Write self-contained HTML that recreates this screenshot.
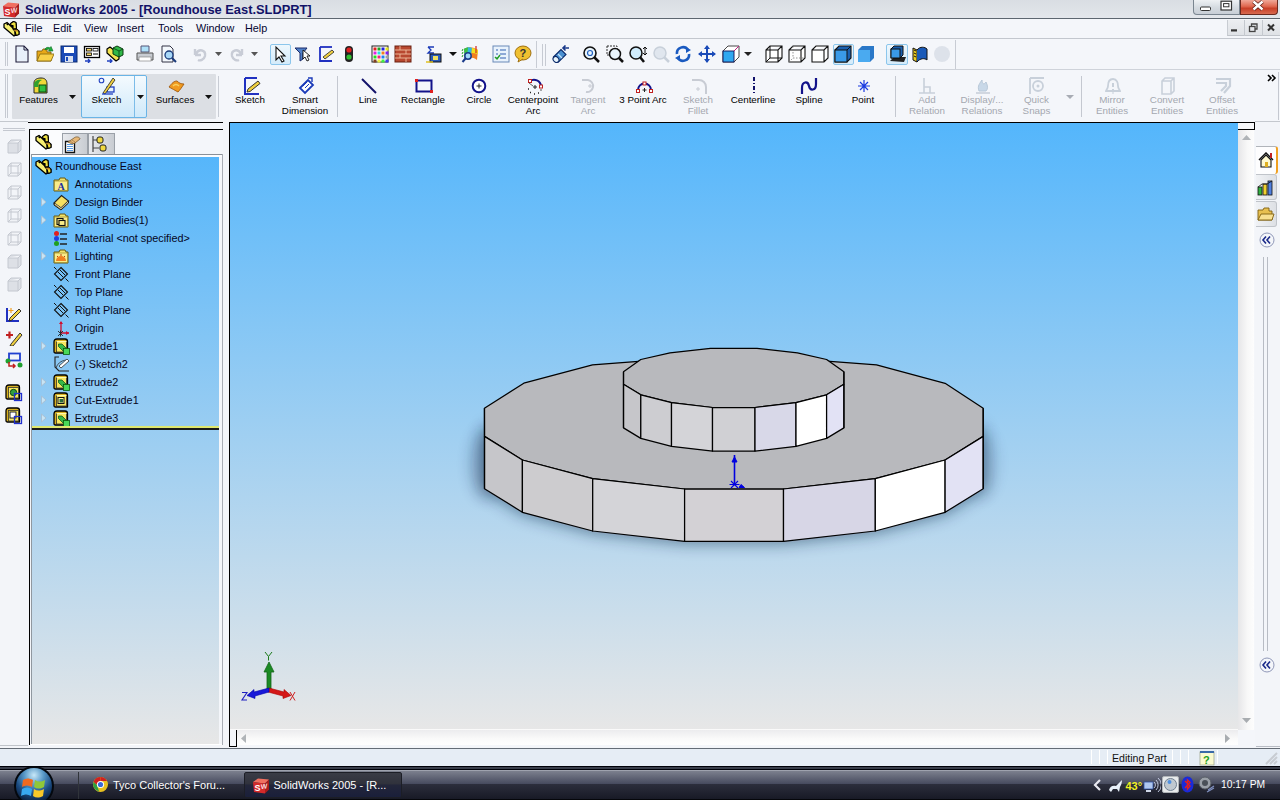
<!DOCTYPE html>
<html><head><meta charset="utf-8">
<style>
*{margin:0;padding:0;box-sizing:border-box}
html,body{width:1280px;height:800px;overflow:hidden;background:#f3f5f9;font-family:"Liberation Sans",sans-serif;position:relative}
.a{position:absolute}
#title{left:0;top:0;width:1280px;height:19px;background:linear-gradient(#d9dde3,#e3e6eb);border-bottom:1px solid #5d6670}
#title .t{left:25px;top:1.6px;font-weight:bold;font-size:12.85px;color:#121268;letter-spacing:0px;white-space:nowrap}
#menu{left:0;top:19px;width:1280px;height:20px;background:#f4f6fa;border-bottom:1px solid #c3c7ce}
#menu span{position:absolute;top:2.6px;font-size:10.8px;color:#050530}
#tb1{left:0;top:39px;width:1280px;height:31px;background:#f4f6fa;border-bottom:1px solid #cfd3da}
#cm{left:0;top:70px;width:1280px;height:52px;background:#f4f6fa}
.lbl{position:absolute;font-size:9.3px;color:#000;text-align:center;line-height:11px;white-space:nowrap}
.dis{color:#a8a8ac}
#main{left:0;top:122px;width:1280px;height:625px}
#vp{left:229px;top:122px;width:1026px;height:625px;border-left:1px solid #000;border-top:1px solid #000;background:#f4f6fa}
#vpbg{left:230px;top:123px;width:1008px;height:607px;background:linear-gradient(#54b6fc,#e7e7e7)}
#ft{left:29px;top:129px;width:194px;height:616px;border-left:1px solid #000;border-top:1px solid #000;background:#f4f6fa}
#tree{left:31px;top:157px;width:188px;height:587px;background:linear-gradient(#56b6fb,#e7e7e7)}
.row{position:absolute;left:0;height:18px;font-size:10.7px;color:#0b0b30;white-space:nowrap}
#status{left:0;top:748px;width:1280px;height:18px;background:#e6edf5;border-top:1px solid #646c76}
#task{left:0;top:767px;width:1280px;height:33px;background:linear-gradient(#3a3f47 0%,#1e2228 45%,#0d0f12 100%);border-top:1px solid #000}
</style></head><body>
<div id="title" class="a"><div class="t a">SolidWorks 2005 - [Roundhouse East.SLDPRT]</div></div>
<div id="menu" class="a">
<span style="left:25px">File</span><span style="left:53px">Edit</span><span style="left:84px">View</span><span style="left:117px">Insert</span><span style="left:158px">Tools</span><span style="left:196px">Window</span><span style="left:245px">Help</span>
</div>
<div id="tb1" class="a"></div>
<div id="cm" class="a"></div>
<div id="vp" class="a"></div>
<div id="vpbg" class="a"></div>
<div id="ft" class="a"></div>
<div id="tree" class="a"></div>
<div id="status" class="a"></div>
<div id="task" class="a"></div>
<svg class="a" style="left:2px;top:1px" width="18" height="17" viewBox="0 0 18 17"><path d="M1,5 L6,1.5 L17,2.5 L13,6.5 Z" fill="#f07060"/><path d="M13,6.5 L17,2.5 L17,12.5 L13,16.5 Z" fill="#a81c1c"/><path d="M1,5 L13,6.5 L13,16.5 L2,15 Z" fill="#d42a2a"/><text x="2.6" y="14" font-size="9" font-weight="bold" fill="#fff" font-family="Liberation Sans">S</text><text x="8.8" y="13.5" font-size="7" font-weight="bold" fill="#f4d8d8" font-family="Liberation Sans" transform="skewY(-8)">W</text></svg>
<div class="a" style="left:1193px;top:0;width:47px;height:15px;border:1px solid #7a8590;border-top:none;border-radius:0 0 0 4px;background:linear-gradient(#eef1f4,#d4dae0 55%,#c8ced6)"></div>
<div class="a" style="left:1240px;top:0;width:38px;height:15px;border:1px solid #6a2a20;border-top:none;border-radius:0 0 4px 0;background:linear-gradient(#f0a898,#e06850 45%,#c84028 60%,#d86a50)"></div>
<svg class="a" style="left:1199px;top:0px" width="40" height="13" viewBox="0 0 40 13"><rect x="1.5" y="7" width="10" height="3.5" rx="1" fill="#fff" stroke="#333" stroke-width="1"/><rect x="22" y="1.2" width="10.5" height="8.8" fill="#fff" stroke="#333" stroke-width="1.2"/><rect x="24.6" y="3.6" width="5.3" height="3.2" fill="none" stroke="#333" stroke-width="1"/></svg>
<svg class="a" style="left:1251px;top:0px" width="14" height="12" viewBox="0 0 14 12"><path d="M2.5,1.5 L11.5,9.5 M11.5,1.5 L2.5,9.5" stroke="#5a1a10" stroke-width="3.8"/><path d="M2.5,1.5 L11.5,9.5 M11.5,1.5 L2.5,9.5" stroke="#fff" stroke-width="2.4"/></svg>
<svg class="a" style="left:3px;top:20px" width="18" height="17" viewBox="0 0 18 17"><path d="M1,4 L4,2.5 L8,5 L8,2.5 L10.5,1 L13,2 L14,4.5 L14,9 L16.5,11 L16.5,14.5 L13.5,16 L11,16 Z" fill="#000"/><path d="M1,4 L4,2.5 L12,10 L12,15.5 L11,16 L1,7.5 Z" fill="#f6ee70" stroke="#000" stroke-width="1.3" stroke-linejoin="round"/><path d="M7.5,3.5 L10.5,1.5 L13,2.5 L13.5,8.5 L10,9 L10,5.5 L8,5.5 Z" fill="#eee040" stroke="#000" stroke-width="1.2" stroke-linejoin="round"/><path d="M10.5,9.5 L14,9.5 L16,11.5 L16,14.5 L13,15.5 L12,11 Z" fill="#f0e030" stroke="#000" stroke-width="1.2" stroke-linejoin="round"/><path d="M10.5,9.8 L14,9.8 L15.5,11.2 L12,11.5Z" fill="#c08a28"/><path d="M3.5,3.5 L5,5" stroke="#000" stroke-width="1.2"/></svg>
<div class="a" style="left:1227px;top:20px;width:53px;height:16px;background:linear-gradient(#eceef1,#dfe2e6);border-left:1px solid #c8ccd2;border-bottom:1px solid #c0c4ca"></div>
<div class="a" style="left:1244px;top:20px;width:1px;height:16px;background:#c4c8ce"></div><div class="a" style="left:1262px;top:20px;width:1px;height:16px;background:#c4c8ce"></div>
<svg class="a" style="left:1227px;top:20px" width="53" height="16" viewBox="0 0 53 16"><rect x="4" y="9.3" width="6" height="2.2" fill="#333"/><rect x="22.5" y="6.5" width="5.5" height="5" fill="none" stroke="#444" stroke-width="1.3"/><path d="M24.5,6.5 L24.5,4 L30,4 L30,9 L28,9" fill="none" stroke="#444" stroke-width="1.3"/><path d="M41,4.5 L47,10.5 M47,4.5 L41,10.5" stroke="#333" stroke-width="2"/></svg>
<div class="a" style="left:5px;top:42px;width:3px;height:24px;border-left:1px solid #c6cad2;border-right:1px solid #c6cad2"></div>
<svg class="a" style="left:13px;top:45px" width="18" height="18" viewBox="0 0 18 18"><path d="M3,1 L11,1 L15,5 L15,17 L3,17 Z" fill="#fff" stroke="#1a1a3a" stroke-width="1.1"/><path d="M4,2 L10,2 L14,6 L14,16 L4,16Z" fill="#e8f0fa"/><path d="M11,1 L11,5 L15,5" fill="none" stroke="#1a1a3a"/></svg>
<svg class="a" style="left:36px;top:45px" width="18" height="18" viewBox="0 0 18 18"><path d="M1,6 L6,6 L7,4 L11,4 L11,7 L15,7 L15,16 L1,16Z" fill="#e8a818" stroke="#806010" stroke-width="0.9"/><path d="M4,9 L18,9 L15,16 L1,16Z" fill="#f8d048" stroke="#907010" stroke-width="0.9"/><path d="M9,4 C10,2 13,2 14,3 L15,1.5 L17,6 L12.5,6 L13.5,4.5 C12.5,4 11,4 9,5Z" fill="#20b040" stroke="#0a6a20" stroke-width="0.6"/></svg>
<svg class="a" style="left:60px;top:45px" width="18" height="18" viewBox="0 0 18 18"><rect x="1" y="1" width="16" height="16" fill="#1a4ab8" stroke="#0a2a70"/><rect x="4" y="2" width="10" height="6" fill="#fff"/><rect x="5" y="11" width="8" height="6" fill="#d8e0f0"/><rect x="6" y="12" width="2" height="4" fill="#1a4ab8"/></svg>
<svg class="a" style="left:83px;top:45px" width="18" height="18" viewBox="0 0 18 18"><rect x="1.5" y="1.5" width="15" height="11" fill="#fff" stroke="#000" stroke-width="1.3"/><rect x="3.5" y="3.5" width="5" height="2.5" fill="#f8d868" stroke="#000" stroke-width="0.8"/><rect x="10" y="3.5" width="5" height="2.5" fill="#fff" stroke="#000" stroke-width="0.8"/><rect x="3.5" y="8" width="5" height="2.5" fill="#f8d868" stroke="#000" stroke-width="0.8"/><path d="M10,9 L15,9" stroke="#000"/><path d="M2,16 L7,16 M5,14 L7,16 L5,18" stroke="#2040c0" stroke-width="1.3" fill="none"/></svg>
<svg class="a" style="left:106px;top:45px" width="18" height="18" viewBox="0 0 18 18"><path d="M1,4 L4,2 L13,9 L13,14 L10,16 L1,8Z" fill="#f4e450" stroke="#000" stroke-width="1.2" stroke-linejoin="round"/><path d="M7,3 L11,1 L17,4 L17,10 L13,12 L7,9Z" fill="#30b848" stroke="#0a3a10" stroke-width="1"/><path d="M7,3 L13,6 L17,4 M13,6 L13,12" stroke="#0a3a10" stroke-width="0.8" fill="none"/><path d="M1,16 L6,16 M4,14 L6,16 L4,18" stroke="#2040c0" stroke-width="1.3" fill="none"/></svg>
<svg class="a" style="left:136px;top:45px" width="18" height="18" viewBox="0 0 18 18"><path d="M5,1 L13,1 L13,7 L5,7Z" fill="#aee0f8" stroke="#557"/><path d="M1,8 L17,8 L17,15 L1,15Z" fill="#c8ccd2" stroke="#555"/><rect x="3" y="12" width="12" height="4" fill="#fff" stroke="#777" stroke-width="0.6"/></svg>
<svg class="a" style="left:160px;top:45px" width="18" height="18" viewBox="0 0 18 18"><path d="M2,1 L10,1 L13,4 L13,17 L2,17Z" fill="#f4f8fc" stroke="#334" stroke-width="1"/><circle cx="9" cy="10" r="4" fill="#a8d8f8" stroke="#1a3a7a" stroke-width="1.3"/><path d="M12,13 L16,17" stroke="#1a3a7a" stroke-width="2"/></svg>
<svg class="a" style="left:191px;top:45px" width="18" height="18" viewBox="0 0 18 18"><path d="M4,4 L4,10 M4,10 L10,10 M5,9 C8,3 15,5 14,11 C13,15 9,16 7,15" fill="none" stroke="#c8ccd6" stroke-width="2.4"/></svg>
<svg class="a" style="left:228px;top:45px" width="18" height="18" viewBox="0 0 18 18"><path d="M14,4 L14,10 M14,10 L8,10 M13,9 C10,3 3,5 4,11 C5,15 9,16 11,15" fill="none" stroke="#c8ccd6" stroke-width="2.4"/></svg>
<svg class="a" style="left:215px;top:52px" width="7" height="4" viewBox="0 0 7 4"><path d="M0,0 L7,0 L3.5,4Z" fill="#555"/></svg>
<svg class="a" style="left:251px;top:52px" width="7" height="4" viewBox="0 0 7 4"><path d="M0,0 L7,0 L3.5,4Z" fill="#555"/></svg>
<div class="a" style="left:270px;top:44px;width:21px;height:21px;border:1px solid #8cc6ec;border-radius:2px;background:linear-gradient(#eef7fd,#d4ebfa)"></div>
<svg class="a" style="left:271px;top:45px" width="18" height="18" viewBox="0 0 18 18"><path d="M5,2 L5,15 L8,12 L11,17 L13,16 L10,11 L14,11Z" fill="#fff" stroke="#111" stroke-width="1.1"/></svg>
<svg class="a" style="left:294px;top:45px" width="18" height="18" viewBox="0 0 18 18"><path d="M1,3 L13,3 L9,8 L9,14 L6,16 L6,8Z" fill="#5080c8" stroke="#1a2a6a"/><path d="M9,5 L9,14 L11,12 L13,16 L15,15 L13,11 L16,11Z" fill="#fff" stroke="#111" stroke-width="0.9"/></svg>
<svg class="a" style="left:317px;top:45px" width="18" height="18" viewBox="0 0 18 18"><path d="M3,2 L3,16 L15,16" fill="none" stroke="#2030c0" stroke-width="1.8"/><path d="M3,2 L15,2" stroke="#2030c0" stroke-width="1.8"/><path d="M6,12 L15,5 L17,7 L8,14 Z" fill="#f0d040" stroke="#222" stroke-width="0.8"/></svg>
<svg class="a" style="left:340px;top:45px" width="18" height="18" viewBox="0 0 18 18"><rect x="5" y="1" width="8" height="16" rx="4" fill="#222"/><circle cx="9" cy="5" r="2.6" fill="#e02020"/><circle cx="9" cy="12" r="2.6" fill="#30c030"/></svg>
<svg class="a" style="left:371px;top:45px" width="18" height="18" viewBox="0 0 18 18"><rect x="1" y="1" width="16" height="16" fill="#fff" stroke="#222"/><rect x="2.5" y="2.5" width="3" height="3" fill="#e02020"/><rect x="6.5" y="2.5" width="3" height="3" fill="#20a020"/><rect x="10.5" y="2.5" width="3" height="3" fill="#2020e0"/><rect x="14.5" y="2.5" width="3" height="3" fill="#e0e020"/><rect x="2.5" y="6.5" width="3" height="3" fill="#e020e0"/><rect x="6.5" y="6.5" width="3" height="3" fill="#20e0e0"/><rect x="10.5" y="6.5" width="3" height="3" fill="#f08020"/><rect x="14.5" y="6.5" width="3" height="3" fill="#8020f0"/><rect x="2.5" y="10.5" width="3" height="3" fill="#20e020"/><rect x="6.5" y="10.5" width="3" height="3" fill="#f02080"/><rect x="10.5" y="10.5" width="3" height="3" fill="#2080f0"/><rect x="14.5" y="10.5" width="3" height="3" fill="#a0a0a0"/><rect x="2.5" y="14.5" width="3" height="3" fill="#804020"/><rect x="6.5" y="14.5" width="3" height="3" fill="#f0f040"/><rect x="10.5" y="14.5" width="3" height="3" fill="#40f040"/><rect x="14.5" y="14.5" width="3" height="3" fill="#4040f0"/></svg>
<svg class="a" style="left:394px;top:45px" width="18" height="18" viewBox="0 0 18 18"><rect x="1" y="1" width="16" height="16" fill="#b84830" stroke="#6a2010"/><path d="M1,5 L17,5 M1,9 L17,9 M1,13 L17,13 M6,1 L6,5 M12,5 L12,9 M6,9 L6,13 M12,13 L12,17" stroke="#f0c0a0" stroke-width="0.9"/></svg>
<svg class="a" style="left:425px;top:45px" width="18" height="18" viewBox="0 0 18 18"><path d="M3,2 L9,2 M3,2 L6,5 L3,8 L9,8" stroke="#1a3ab8" stroke-width="1.3" fill="none"/><rect x="5" y="9" width="11" height="8" fill="#2a5ab8" stroke="#111"/><rect x="8" y="11" width="5" height="4" fill="#f0e060"/><path d="M1,17 L8,17" stroke="#e0c020" stroke-width="1.5"/></svg>
<svg class="a" style="left:449px;top:52px" width="8" height="4" viewBox="0 0 8 4"><path d="M0,0 L8,0 L4,4Z" fill="#111"/></svg>
<svg class="a" style="left:461px;top:45px" width="18" height="18" viewBox="0 0 18 18"><path d="M3,4 C7,1 13,2 17,5 L16,15 C12,12 7,12 4,14Z" fill="#f08020"/><path d="M3,4 C6,2 9,2 11,3 L10,13 C8,12 6,13 4,14Z" fill="#30b8e0"/><path d="M3,4 C4,3 6,2.5 7,2.5 L6,13 C5,13 4.5,13.5 4,14Z" fill="#40c040"/><path d="M11,3 C13,3 15,4 17,5 L16.5,9 C14,8 12,8 10.5,8Z" fill="#f0e020"/><path d="M2,4 L1,6 M2,7 L1,9 M2,10 L1,12" stroke="#20a020" stroke-width="1"/><circle cx="7" cy="11" r="3.2" fill="#a0d8f8" stroke="#1a3a8a" stroke-width="1.5"/><path d="M4.5,13.5 L1.5,17" stroke="#1a3a8a" stroke-width="2"/><path d="M15,1 L15,8" stroke="#d02020" stroke-width="1.2"/></svg>
<svg class="a" style="left:492px;top:45px" width="18" height="18" viewBox="0 0 18 18"><rect x="1" y="1" width="16" height="16" fill="#e8f2fc" stroke="#6a8ab8"/><path d="M4,5 L6,5 M8,5 L14,5 M4,9 L6,9 M8,9 L14,9 M4,13 L6,13 M8,13 L14,13" stroke="#3060b0" stroke-width="1.2"/><path d="M3,12 L5,14 L8,10" stroke="#20a020" stroke-width="1.4" fill="none"/></svg>
<svg class="a" style="left:514px;top:45px" width="18" height="18" viewBox="0 0 18 18"><ellipse cx="9" cy="8" rx="8" ry="7" fill="#f0c030" stroke="#a07010"/><path d="M5,14 L4,17 L9,14" fill="#f0c030" stroke="#a07010"/><text x="5.5" y="12" font-size="11" font-weight="bold" fill="#333" font-family="Liberation Sans">?</text></svg>
<div class="a" style="left:536px;top:41px;width:1px;height:27px;background:#c8ccd4"></div>
<div class="a" style="left:542px;top:44px;width:4px;height:22px;border-left:1px solid #c6cad2;border-right:1px solid #c6cad2"></div>
<svg class="a" style="left:552px;top:45px" width="18" height="18" viewBox="0 0 18 18"><path d="M1.5,12 L9,4.5 L14,9.5 L6.5,17Z" fill="#4a90d0" stroke="#0a2a6a" stroke-width="1.1"/><ellipse cx="4" cy="14.5" rx="2.6" ry="3.2" transform="rotate(-45 4 14.5)" fill="#e8f4fc" stroke="#0a2a6a" stroke-width="1.1"/><path d="M6,9 L10,13" stroke="#c0e0f8" stroke-width="1.2"/><path d="M17,3 L11,3 M13.5,0.5 L11,3 L13.5,5.5" stroke="#1a3a8a" stroke-width="1.6" fill="none"/></svg>
<svg class="a" style="left:582px;top:45px" width="18" height="18" viewBox="0 0 18 18"><circle cx="8" cy="8" r="6" fill="#e8f4fc" stroke="#111" stroke-width="1.6"/><circle cx="8" cy="8" r="2.5" fill="none" stroke="#2060c0" stroke-width="1.2"/><path d="M12,12 L17,17" stroke="#111" stroke-width="2.5"/></svg>
<svg class="a" style="left:606px;top:45px" width="18" height="18" viewBox="0 0 18 18"><rect x="1" y="1" width="10" height="9" fill="none" stroke="#333" stroke-dasharray="2,1"/><circle cx="9" cy="9" r="5.5" fill="#e8f4fc" stroke="#111" stroke-width="1.5"/><path d="M13,13 L17,17" stroke="#111" stroke-width="2.5"/></svg>
<svg class="a" style="left:629px;top:45px" width="18" height="18" viewBox="0 0 18 18"><circle cx="7" cy="8" r="6" fill="#d0ecfc" stroke="#111" stroke-width="1.5"/><path d="M11,12 L15,17" stroke="#111" stroke-width="2.5"/><path d="M16,2 L16,10 M14,4 L16,2 L18,4 M14,8 L16,10 L18,8" stroke="#111" stroke-width="1" fill="none"/></svg>
<svg class="a" style="left:652px;top:45px" width="18" height="18" viewBox="0 0 18 18"><circle cx="8" cy="8" r="6" fill="#e0e6ee" stroke="#c8d0da" stroke-width="1.5"/><path d="M12,12 L17,17" stroke="#c8d0da" stroke-width="2.5"/></svg>
<svg class="a" style="left:674px;top:45px" width="18" height="18" viewBox="0 0 18 18"><path d="M3,9 A6,6 0 0 1 14,5" fill="none" stroke="#1a5ac0" stroke-width="2.6"/><path d="M15,9 A6,6 0 0 1 4,13" fill="none" stroke="#1a5ac0" stroke-width="2.6"/><path d="M12,2 L17,5 L12,8Z M6,10 L1,13 L6,16Z" fill="#1a5ac0"/></svg>
<svg class="a" style="left:698px;top:45px" width="18" height="18" viewBox="0 0 18 18"><path d="M9,1 L9,17 M1,9 L17,9" stroke="#1a4ab8" stroke-width="2"/><path d="M9,0 L6,4 L12,4Z M9,18 L6,14 L12,14Z M0,9 L4,6 L4,12Z M18,9 L14,6 L14,12Z" fill="#1a4ab8"/></svg>
<svg class="a" style="left:722px;top:45px" width="18" height="18" viewBox="0 0 18 18"><path d="M1,6 L6,1 L17,1 L17,12 L12,17 L1,17Z" fill="#fff" stroke="#333" stroke-width="0.9"/><rect x="1" y="6" width="11" height="11" fill="#30a8f0" stroke="#115" stroke-width="0.9"/><path d="M12,6 L17,1" stroke="#c02080"/></svg>
<svg class="a" style="left:744px;top:52px" width="8" height="4" viewBox="0 0 8 4"><path d="M0,0 L8,0 L4,4Z" fill="#222"/></svg>
<svg class="a" style="left:765px;top:45px" width="18" height="18" viewBox="0 0 18 18"><path d="M1,5 L5,1 L17,1 L17,13 L13,17 L1,17Z M1,5 L13,5 L17,1 M13,5 L13,17" fill="#fff" stroke="#111" stroke-width="1.1"/><path d="M5,1 L5,13 L17,13 M1,17 L5,13" stroke="#111" stroke-width="1" fill="none"/></svg>
<svg class="a" style="left:788px;top:45px" width="18" height="18" viewBox="0 0 18 18"><path d="M1,5 L5,1 L17,1 L17,13 L13,17 L1,17Z M1,5 L13,5 L17,1 M13,5 L13,17" fill="#fff" stroke="#111" stroke-width="1.1"/><path d="M5,1 L5,13 L17,13 M1,17 L5,13" stroke="#777" stroke-width="0.8" stroke-dasharray="1.5,1.5" fill="none"/></svg>
<svg class="a" style="left:811px;top:45px" width="18" height="18" viewBox="0 0 18 18"><path d="M1,5 L5,1 L17,1 L17,13 L13,17 L1,17Z M1,5 L13,5 L17,1 M13,5 L13,17" fill="#fff" stroke="#111" stroke-width="1.1"/></svg>
<div class="a" style="left:833px;top:44px;width:21px;height:21px;border:1px solid #8cc6ec;border-radius:2px;background:linear-gradient(#eef7fd,#d4ebfa)"></div>
<svg class="a" style="left:834px;top:45px" width="18" height="18" viewBox="0 0 18 18"><path d="M1,5 L5,1 L17,1 L17,13 L13,17 L1,17Z" fill="#1a60b0" stroke="#111" stroke-width="1.1"/><rect x="1" y="5" width="12" height="12" fill="#3a9ae8" stroke="#111" stroke-width="1"/><path d="M13,5 L17,1" stroke="#111"/></svg>
<svg class="a" style="left:857px;top:45px" width="18" height="18" viewBox="0 0 18 18"><path d="M1,5 L5,1 L17,1 L17,13 L13,17 L1,17Z" fill="#2a78c8"/><rect x="1" y="5" width="12" height="12" fill="#4aaaf0"/></svg>
<div class="a" style="left:886px;top:44px;width:22px;height:21px;border:1px solid #8cc6ec;border-radius:2px;background:linear-gradient(#eef7fd,#d4ebfa)"></div>
<svg class="a" style="left:888px;top:45px" width="18" height="18" viewBox="0 0 18 18"><path d="M2,16 L6,12 L18,12 L16,17 Z" fill="#222"/><path d="M3,4 L6,1 L15,1 L15,10 L12,13 L3,13Z" fill="#1a60b0" stroke="#111"/><rect x="3" y="4" width="9" height="9" fill="#3a9ae8" stroke="#111"/></svg>
<svg class="a" style="left:911px;top:45px" width="18" height="18" viewBox="0 0 18 18"><path d="M2,3 L2,15 L6,17 L6,5Z" fill="#f0d020" stroke="#111"/><path d="M6,5 C9,1 14,2 16,4 L16,15 C14,13 9,13 6,17" fill="#1a5ab8" stroke="#111"/><path d="M3,5 L5,6 M3,8 L5,9 M3,11 L5,12" stroke="#111"/></svg>
<svg class="a" style="left:933px;top:45px" width="18" height="18" viewBox="0 0 18 18"><circle cx="9" cy="9" r="8" fill="#dde2ea"/></svg>
<div class="a" style="left:955px;top:40px;width:1px;height:29px;background:#c8ccd4"></div>
<div class="a" style="left:5px;top:74px;width:3px;height:44px;border-left:1px solid #c6cad2;border-right:1px solid #c6cad2"></div>
<div class="a" style="left:12px;top:74px;width:204px;height:45px;background:#dcdfe4;border-radius:1px"></div>
<div class="a" style="left:81px;top:75px;width:66px;height:43px;border:1px solid #6ab4e6;border-radius:2px;background:linear-gradient(#f4fafe 0%,#e2f2fc 50%,#cfe9fa 100%)"></div>
<div class="a" style="left:134px;top:76px;width:1px;height:41px;background:#7cbce8"></div>
<div class="a" style="left:218px;top:76px;width:1px;height:41px;background:#c8ccd4"></div>
<svg class="a" style="left:69px;top:95px" width="7" height="4" viewBox="0 0 7 4"><path d="M0,0 L7,0 L3.5,4Z" fill="#111"/></svg>
<svg class="a" style="left:137px;top:95px" width="7" height="4" viewBox="0 0 7 4"><path d="M0,0 L7,0 L3.5,4Z" fill="#111"/></svg>
<svg class="a" style="left:205px;top:95px" width="7" height="4" viewBox="0 0 7 4"><path d="M0,0 L7,0 L3.5,4Z" fill="#111"/></svg>
<div class="a" style="left:-21.5px;width:120px;text-align:center;top:94.33px;font-size:9.8px;line-height:11.27px;color:#000;white-space:nowrap">Features</div>
<div class="a" style="left:46.5px;width:120px;text-align:center;top:94.33px;font-size:9.8px;line-height:11.27px;color:#000;white-space:nowrap">Sketch</div>
<div class="a" style="left:115px;width:120px;text-align:center;top:94.33px;font-size:9.8px;line-height:11.27px;color:#000;white-space:nowrap">Surfaces</div>
<svg class="a" style="left:31px;top:77px" width="18" height="18" viewBox="0 0 18 18"><path d="M3,6 C3,2 7,1 10,1 C14,1 16,3 16,7 L16,16 L3,16Z" fill="#f0d838" stroke="#222"/><path d="M3,8 C3,3 8,2 11,3 C8,4 7,7 7,10 L3,10Z" fill="#30a030"/><rect x="8" y="8" width="7" height="7" fill="#30c040" stroke="#0a4a10"/></svg>
<svg class="a" style="left:98px;top:77px" width="18" height="18" viewBox="0 0 18 18"><circle cx="3.5" cy="3.5" r="2.3" fill="none" stroke="#2040c0" stroke-width="1.1"/><rect x="9" y="10" width="7" height="5" fill="none" stroke="#2040c0" stroke-width="1.3"/><path d="M5,16 L15,1 L17,3 L7,17Z" fill="#f0d040" stroke="#222" stroke-width="0.8"/><path d="M4,17 L15,17" stroke="#2040c0" stroke-width="1.3"/></svg>
<svg class="a" style="left:167px;top:78px" width="18" height="16" viewBox="0 0 18 16"><path d="M2,9 C5,5 7,3 10,3 C12,5 14,6 17,6 C15,9 13,12 11,14 C8,12 5,11 2,9Z" fill="#f09a20" stroke="#a05a10" stroke-width="0.9"/><path d="M6,8 C8,6 10,6 12,8" stroke="#f8d060" stroke-width="1.5" fill="none"/></svg>
<div class="a" style="left:190px;width:120px;text-align:center;top:94.33px;font-size:9.8px;line-height:11.27px;color:#000;white-space:nowrap">Sketch</div>
<div class="a" style="left:245px;width:120px;text-align:center;top:94.33px;font-size:9.8px;line-height:11.27px;color:#000;white-space:nowrap">Smart</div>
<div class="a" style="left:245px;width:120px;text-align:center;top:105.13px;font-size:9.8px;line-height:11.27px;color:#000;white-space:nowrap">Dimension</div>
<div class="a" style="left:308px;width:120px;text-align:center;top:94.33px;font-size:9.8px;line-height:11.27px;color:#000;white-space:nowrap">Line</div>
<div class="a" style="left:363px;width:120px;text-align:center;top:94.33px;font-size:9.8px;line-height:11.27px;color:#000;white-space:nowrap">Rectangle</div>
<div class="a" style="left:419px;width:120px;text-align:center;top:94.33px;font-size:9.8px;line-height:11.27px;color:#000;white-space:nowrap">Circle</div>
<div class="a" style="left:473px;width:120px;text-align:center;top:94.33px;font-size:9.8px;line-height:11.27px;color:#000;white-space:nowrap">Centerpoint</div>
<div class="a" style="left:473px;width:120px;text-align:center;top:105.13px;font-size:9.8px;line-height:11.27px;color:#000;white-space:nowrap">Arc</div>
<div class="a" style="left:528px;width:120px;text-align:center;top:94.33px;font-size:9.8px;line-height:11.27px;color:#a4a8b0;white-space:nowrap">Tangent</div>
<div class="a" style="left:528px;width:120px;text-align:center;top:105.13px;font-size:9.8px;line-height:11.27px;color:#a4a8b0;white-space:nowrap">Arc</div>
<div class="a" style="left:583px;width:120px;text-align:center;top:94.33px;font-size:9.8px;line-height:11.27px;color:#000;white-space:nowrap">3 Point Arc</div>
<div class="a" style="left:638px;width:120px;text-align:center;top:94.33px;font-size:9.8px;line-height:11.27px;color:#a4a8b0;white-space:nowrap">Sketch</div>
<div class="a" style="left:638px;width:120px;text-align:center;top:105.13px;font-size:9.8px;line-height:11.27px;color:#a4a8b0;white-space:nowrap">Fillet</div>
<div class="a" style="left:693px;width:120px;text-align:center;top:94.33px;font-size:9.8px;line-height:11.27px;color:#000;white-space:nowrap">Centerline</div>
<div class="a" style="left:749px;width:120px;text-align:center;top:94.33px;font-size:9.8px;line-height:11.27px;color:#000;white-space:nowrap">Spline</div>
<div class="a" style="left:803px;width:120px;text-align:center;top:94.33px;font-size:9.8px;line-height:11.27px;color:#000;white-space:nowrap">Point</div>
<div class="a" style="left:867px;width:120px;text-align:center;top:94.33px;font-size:9.8px;line-height:11.27px;color:#a4a8b0;white-space:nowrap">Add</div>
<div class="a" style="left:867px;width:120px;text-align:center;top:105.13px;font-size:9.8px;line-height:11.27px;color:#a4a8b0;white-space:nowrap">Relation</div>
<div class="a" style="left:922px;width:120px;text-align:center;top:94.33px;font-size:9.8px;line-height:11.27px;color:#a4a8b0;white-space:nowrap">Display/...</div>
<div class="a" style="left:922px;width:120px;text-align:center;top:105.13px;font-size:9.8px;line-height:11.27px;color:#a4a8b0;white-space:nowrap">Relations</div>
<div class="a" style="left:976.5px;width:120px;text-align:center;top:94.33px;font-size:9.8px;line-height:11.27px;color:#a4a8b0;white-space:nowrap">Quick</div>
<div class="a" style="left:976.5px;width:120px;text-align:center;top:105.13px;font-size:9.8px;line-height:11.27px;color:#a4a8b0;white-space:nowrap">Snaps</div>
<div class="a" style="left:1052px;width:120px;text-align:center;top:94.33px;font-size:9.8px;line-height:11.27px;color:#a4a8b0;white-space:nowrap">Mirror</div>
<div class="a" style="left:1052px;width:120px;text-align:center;top:105.13px;font-size:9.8px;line-height:11.27px;color:#a4a8b0;white-space:nowrap">Entities</div>
<div class="a" style="left:1107px;width:120px;text-align:center;top:94.33px;font-size:9.8px;line-height:11.27px;color:#a4a8b0;white-space:nowrap">Convert</div>
<div class="a" style="left:1107px;width:120px;text-align:center;top:105.13px;font-size:9.8px;line-height:11.27px;color:#a4a8b0;white-space:nowrap">Entities</div>
<div class="a" style="left:1162px;width:120px;text-align:center;top:94.33px;font-size:9.8px;line-height:11.27px;color:#a4a8b0;white-space:nowrap">Offset</div>
<div class="a" style="left:1162px;width:120px;text-align:center;top:105.13px;font-size:9.8px;line-height:11.27px;color:#a4a8b0;white-space:nowrap">Entities</div>
<div class="a" style="left:337px;top:76px;width:1px;height:41px;background:#c4c8d0"></div>
<div class="a" style="left:895px;top:76px;width:1px;height:41px;background:#c4c8d0"></div>
<div class="a" style="left:1081px;top:76px;width:1px;height:41px;background:#c4c8d0"></div>
<svg class="a" style="left:1066px;top:95px" width="8" height="4" viewBox="0 0 8 4"><path d="M0,0 L8,0 L4,4Z" fill="#a8acb4"/></svg>
<svg class="a" style="left:1267px;top:74px" width="10" height="8" viewBox="0 0 10 8"><path d="M1,1 L4,4 L1,7 M5,1 L8,4 L5,7" stroke="#000" stroke-width="1.6" fill="none"/></svg>
<div class="a" style="left:1278px;top:72px;width:1px;height:48px;background:#c4c8d0"></div>
<svg class="a" style="left:243px;top:77px" width="18" height="18" viewBox="0 0 18 18"><path d="M2,1 L14,1 M2,1 L2,17 L16,17" stroke="#2030c0" stroke-width="2" fill="none"/><path d="M5,12 L15,4 L17,6.5 L7,14.5 L4,15Z" fill="#f0d040" stroke="#222" stroke-width="0.9"/></svg>
<svg class="a" style="left:297px;top:77px" width="18" height="18" viewBox="0 0 18 18"><path d="M3,11 L11,3 L16,8 L8,16Z" fill="#fff" stroke="#1a3ab8" stroke-width="1.8"/><path d="M6,9 L10,5 M8,11 L12,7" stroke="#1a3ab8" stroke-width="1"/><path d="M11,1 L15,1 L15,5" stroke="#1a3ab8" stroke-width="1.4" fill="none"/></svg>
<svg class="a" style="left:360px;top:78px" width="18" height="18" viewBox="0 0 18 18"><path d="M2,1 L16,15" stroke="#12126a" stroke-width="2"/></svg>
<svg class="a" style="left:415px;top:77px" width="18" height="18" viewBox="0 0 18 18"><rect x="1.5" y="3.5" width="15" height="11" fill="none" stroke="#12128a" stroke-width="2"/><rect x="0" y="2" width="3" height="3" fill="#e02020"/><rect x="15" y="13" width="3" height="3" fill="#e02020"/></svg>
<svg class="a" style="left:470px;top:77px" width="18" height="18" viewBox="0 0 18 18"><circle cx="9" cy="9" r="6.3" fill="#fff" stroke="#12128a" stroke-width="2"/><path d="M6.5,9 L11.5,9 M9,6.5 L9,11.5" stroke="#222" stroke-width="1"/></svg>
<svg class="a" style="left:525px;top:77px" width="18" height="18" viewBox="0 0 18 18"><path d="M5,4 A7,7 0 0 1 16,9" fill="none" stroke="#12128a" stroke-width="2"/><path d="M8,10 L12,10 M10,8 L10,12" stroke="#222"/><rect x="3.5" y="2.5" width="3" height="3" fill="#fff" stroke="#c02020"/><rect x="14.5" y="8" width="3" height="3" fill="#fff" stroke="#c02020"/><path d="M4,6 L8,9" stroke="#333" stroke-width="0.8"/><path d="M3,12 L4,12 M5,15.5 L6,15.5 M9,17 L10,17 M13,16 L14,16 M15.5,13 L16.5,13" stroke="#222" stroke-width="1.4"/></svg>
<svg class="a" style="left:580px;top:77px" width="18" height="18" viewBox="0 0 18 18"><path d="M2,3 L8,3 A6,6 0 1 1 6,15" fill="none" stroke="#c8ccd4" stroke-width="2"/><path d="M8,9 L12,9 M10,7 L10,11" stroke="#c8ccd4"/></svg>
<svg class="a" style="left:635px;top:77px" width="18" height="18" viewBox="0 0 18 18"><path d="M3,13 A6.5,6.5 0 0 1 16,13" fill="none" stroke="#12128a" stroke-width="2"/><rect x="1.5" y="12.5" width="3" height="3" fill="#fff" stroke="#c02020" stroke-width="1"/><rect x="14.5" y="12.5" width="3" height="3" fill="#fff" stroke="#c02020" stroke-width="1"/><rect x="8" y="5" width="3" height="3" fill="#fff" stroke="#c02020" stroke-width="1"/><path d="M7.5,13 L11.5,13 M9.5,11 L9.5,15" stroke="#222"/></svg>
<svg class="a" style="left:690px;top:77px" width="18" height="18" viewBox="0 0 18 18"><path d="M2,3 L9,3 A7,7 0 0 1 16,10 L16,17" fill="none" stroke="#c8ccd4" stroke-width="2"/><path d="M6,12 L10,12 M8,10 L8,14" stroke="#c8ccd4"/></svg>
<svg class="a" style="left:745px;top:77px" width="18" height="18" viewBox="0 0 18 18"><path d="M9,0 L9,18" stroke="#12126a" stroke-width="2" stroke-dasharray="4,2,1,2"/></svg>
<svg class="a" style="left:800px;top:77px" width="18" height="18" viewBox="0 0 18 18"><path d="M2,17 L2,11 C2,4 8,4 9,9 C10,14 16,14 16,7 L16,1" fill="none" stroke="#12128a" stroke-width="2.2"/></svg>
<svg class="a" style="left:855px;top:77px" width="18" height="18" viewBox="0 0 18 18"><path d="M9,3 L9,15 M3,9 L15,9 M5,5 L13,13 M13,5 L5,13" stroke="#1a3ae0" stroke-width="1.2"/></svg>
<svg class="a" style="left:918px;top:77px" width="18" height="18" viewBox="0 0 18 18"><path d="M6,1 L6,16 M1,16 L17,16 M6,10 L12,10 L12,16" stroke="#c8d0da" stroke-width="1.6" fill="none"/></svg>
<svg class="a" style="left:974px;top:77px" width="18" height="18" viewBox="0 0 18 18"><path d="M2,16 L16,16" stroke="#c8d0da" stroke-width="1.6"/><path d="M5,14 C3,9 6,6 8,3 C8,7 10,8 12,5 C14,9 14,12 12,14Z" fill="#c8d8e8" stroke="#b8c8d8"/></svg>
<svg class="a" style="left:1028px;top:77px" width="18" height="18" viewBox="0 0 18 18"><path d="M2,1 L16,1 M2,1 L2,17" stroke="#c8d0da" stroke-width="1.8" fill="none"/><circle cx="10" cy="9" r="5" fill="none" stroke="#c8d0da" stroke-width="1.8"/><circle cx="10" cy="9" r="1.5" fill="#c8d0da"/></svg>
<svg class="a" style="left:1104px;top:77px" width="18" height="18" viewBox="0 0 18 18"><path d="M9,2 C5,2 4,6 4,9 C4,12 2,13 2,14 L16,14 C16,13 14,12 14,9 C14,6 13,2 9,2Z" fill="none" stroke="#c8d0da" stroke-width="1.8"/><path d="M9,6 L9,10 M9,12 L9,13" stroke="#c8d0da" stroke-width="2"/><path d="M9,14 L9,17" stroke="#c8d0da"/></svg>
<svg class="a" style="left:1159px;top:77px" width="18" height="18" viewBox="0 0 18 18"><path d="M3,4 L6,1 L15,1 L15,14 L12,17 L3,17Z M3,4 L12,4 L12,17 M12,4 L15,1" fill="none" stroke="#c8d0da" stroke-width="1.6"/></svg>
<svg class="a" style="left:1214px;top:77px" width="18" height="18" viewBox="0 0 18 18"><path d="M2,2 L16,2 L16,9 L10,16 M2,6 L12,6 L12,9 L7,14" fill="none" stroke="#c8d0da" stroke-width="2.2"/></svg>
<div class="a" style="left:0;top:121px;width:28px;height:1px;background:#c4c8ce"></div>
<div class="a" style="left:1255px;top:121px;width:25px;height:1px;background:#c4c8ce"></div>
<div class="a" style="left:3px;top:128px;width:22px;height:3px;border-top:1px solid #c4c8d0;border-bottom:1px solid #c4c8d0"></div>
<svg class="a" style="left:6px;top:138px" width="17" height="17" viewBox="0 0 17 17"><path d="M2,5 L5,2 L15,2 L15,12 L12,15 L2,15 Z M2,5 L12,5 L15,2 M12,5 L12,15" fill="#dde0e6" stroke="#c4c8d0" stroke-width="1"/></svg>
<svg class="a" style="left:6px;top:161px" width="17" height="17" viewBox="0 0 17 17"><path d="M2,5 L5,2 L15,2 L15,12 L12,15 L2,15 Z M2,5 L12,5 L15,2 M12,5 L12,15 M5,2 L5,12 L15,12 M2,15 L5,12" fill="#f0f2f6" stroke="#c4c8d0" stroke-width="1"/></svg>
<svg class="a" style="left:6px;top:184px" width="17" height="17" viewBox="0 0 17 17"><path d="M2,5 L5,2 L15,2 L15,12 L12,15 L2,15 Z M2,5 L12,5 L15,2 M12,5 L12,15 M5,2 L5,12 L15,12 M2,15 L5,12" fill="#f0f2f6" stroke="#c4c8d0" stroke-width="1"/></svg>
<svg class="a" style="left:6px;top:207px" width="17" height="17" viewBox="0 0 17 17"><path d="M2,5 L5,2 L15,2 L15,12 L12,15 L2,15 Z M2,5 L12,5 L15,2 M12,5 L12,15 M5,2 L5,12 L15,12 M2,15 L5,12" fill="#f0f2f6" stroke="#c4c8d0" stroke-width="1"/></svg>
<svg class="a" style="left:6px;top:230px" width="17" height="17" viewBox="0 0 17 17"><path d="M2,5 L5,2 L15,2 L15,12 L12,15 L2,15 Z M2,5 L12,5 L15,2 M12,5 L12,15 M5,2 L5,12 L15,12 M2,15 L5,12" fill="#f0f2f6" stroke="#c4c8d0" stroke-width="1"/></svg>
<svg class="a" style="left:6px;top:253px" width="17" height="17" viewBox="0 0 17 17"><path d="M2,5 L5,2 L15,2 L15,12 L12,15 L2,15 Z M2,5 L12,5 L15,2 M12,5 L12,15" fill="#dde0e6" stroke="#c4c8d0" stroke-width="1"/></svg>
<svg class="a" style="left:6px;top:276px" width="17" height="17" viewBox="0 0 17 17"><path d="M2,5 L5,2 L15,2 L15,12 L12,15 L2,15 Z M2,5 L12,5 L15,2 M12,5 L12,15" fill="#dde0e6" stroke="#c4c8d0" stroke-width="1"/></svg>
<svg class="a" style="left:5px;top:306px" width="18" height="17" viewBox="0 0 18 17"><path d="M2,2 L2,15 L14,15" stroke="#2030c0" stroke-width="2" fill="none"/><path d="M5,12 L14,3 L16,5 L7,14 L4,15Z" fill="#f0d040" stroke="#222" stroke-width="0.9"/><path d="M6,2 L6,7 M3.5,4.5 L8.5,4.5" stroke="#f0a020" stroke-width="1.2"/></svg>
<svg class="a" style="left:5px;top:329px" width="18" height="17" viewBox="0 0 18 17"><path d="M1,6 L8,6 M4.5,2.5 L4.5,9.5" stroke="#c02020" stroke-width="2.2"/><path d="M6,15 L15,4 L17,6 L8,17 L5,17Z" fill="#f0d040" stroke="#222" stroke-width="0.9"/></svg>
<svg class="a" style="left:5px;top:352px" width="18" height="17" viewBox="0 0 18 17"><rect x="4" y="1.5" width="11" height="7" fill="none" stroke="#2040d0" stroke-width="1.8"/><circle cx="3" cy="9" r="2.5" fill="#20a030"/><circle cx="15" cy="13" r="2.5" fill="#20a030"/><path d="M4,10 L4,14 L10,14 M8,12 L10,14 L8,16" stroke="#c02020" stroke-width="1.5" fill="none"/></svg>
<svg class="a" style="left:5px;top:384px" width="18" height="18" viewBox="0 0 18 18"><path d="M1,4 Q1,1 4,1 L12,1 Q14.5,1 14.5,3.5 L14.5,15 L2.5,15 Q1,15 1,13.5 Z" fill="#d8b020" stroke="#000" stroke-width="1.3" stroke-linejoin="round"/><rect x="3.5" y="3.5" width="10" height="10.5" fill="#f8e860" stroke="#333" stroke-width="0.8"/><circle cx="8.5" cy="8.5" r="3.2" fill="#30a040" stroke="#0a4a10"/><rect x="9.5" y="9.5" width="7" height="7" fill="none" stroke="#2030d0" stroke-width="1.3"/></svg>
<svg class="a" style="left:5px;top:407px" width="18" height="18" viewBox="0 0 18 18"><path d="M1,4 Q1,1 4,1 L12,1 Q14.5,1 14.5,3.5 L14.5,15 L2.5,15 Q1,15 1,13.5 Z" fill="#d8b020" stroke="#000" stroke-width="1.3" stroke-linejoin="round"/><rect x="3.5" y="3.5" width="10" height="10.5" fill="#f8e860" stroke="#333" stroke-width="0.8"/><rect x="5" y="5" width="6" height="6" fill="#fff" stroke="#222"/><rect x="9.5" y="9.5" width="7" height="7" fill="none" stroke="#2030d0" stroke-width="1.3"/></svg>
<div class="a" style="left:28px;top:122px;width:195px;height:1px;background:#000"></div>
<div class="a" style="left:31px;top:130px;width:31px;height:25px;background:#fbfcfe"></div>
<div class="a" style="left:62px;top:133px;width:26px;height:21px;background:linear-gradient(90deg,#e8eaee,#c8ccd2);border:1px solid #9aa0a8;border-bottom:none"></div>
<div class="a" style="left:88px;top:133px;width:27px;height:21px;background:linear-gradient(90deg,#e8eaee,#c8ccd2);border:1px solid #9aa0a8;border-bottom:none"></div>
<div class="a" style="left:31px;top:154px;width:192px;height:1px;background:#8a9098"></div>
<div class="a" style="left:32px;top:155px;width:190px;height:2px;background:#fbfcfe"></div>
<svg class="a" style="left:35px;top:133px" width="18" height="17" viewBox="0 0 18 17"><path d="M1,4 L4,2.5 L8,5 L8,2.5 L10.5,1 L13,2 L14,4.5 L14,9 L16.5,11 L16.5,14.5 L13.5,16 L11,16 Z" fill="#000"/><path d="M1,4 L4,2.5 L12,10 L12,15.5 L11,16 L1,7.5 Z" fill="#f6ee70" stroke="#000" stroke-width="1.3" stroke-linejoin="round"/><path d="M7.5,3.5 L10.5,1.5 L13,2.5 L13.5,8.5 L10,9 L10,5.5 L8,5.5 Z" fill="#eee040" stroke="#000" stroke-width="1.2" stroke-linejoin="round"/><path d="M10.5,9.5 L14,9.5 L16,11.5 L16,14.5 L13,15.5 L12,11 Z" fill="#f0e030" stroke="#000" stroke-width="1.2" stroke-linejoin="round"/><path d="M10.5,9.8 L14,9.8 L15.5,11.2 L12,11.5Z" fill="#c08a28"/><path d="M3.5,3.5 L5,5" stroke="#000" stroke-width="1.2"/></svg>
<svg class="a" style="left:63px;top:135px" width="19" height="19" viewBox="0 0 19 19"><path d="M2.5,6.5 L2.5,17.5 L11.5,17.5 L11.5,6.5Z" fill="#fff" stroke="#111" stroke-width="1.3"/><path d="M4,9.5 L10,9.5 M4,11.5 L10,11.5 M4,13.5 L10,13.5 M4,15.5 L10,15.5" stroke="#5a9ae0" stroke-width="1"/><path d="M5,7 L11,3 C13,1 17,2 17,4 L12,8 L9,9Z" fill="#e8b878" stroke="#7a5a30" stroke-width="0.8"/><path d="M7,6 L10,8 M9,5 L12,7" stroke="#8a6a40" stroke-width="0.6"/></svg>
<svg class="a" style="left:91px;top:135px" width="18" height="18" viewBox="0 0 18 18"><path d="M2,1 L2,17 M2,5 L6,5 M2,13 L8,13" stroke="#444" stroke-width="1.2"/><rect x="6" y="2" width="6" height="6" rx="2" fill="#f0d840" stroke="#222"/><rect x="9" y="10" width="6" height="6" rx="2" fill="#f0d840" stroke="#222"/></svg>
<svg class="a" style="left:35px;top:158px" width="18" height="17" viewBox="0 0 18 17"><path d="M1,4 L4,2.5 L8,5 L8,2.5 L10.5,1 L13,2 L14,4.5 L14,9 L16.5,11 L16.5,14.5 L13.5,16 L11,16 Z" fill="#000"/><path d="M1,4 L4,2.5 L12,10 L12,15.5 L11,16 L1,7.5 Z" fill="#f6ee70" stroke="#000" stroke-width="1.3" stroke-linejoin="round"/><path d="M7.5,3.5 L10.5,1.5 L13,2.5 L13.5,8.5 L10,9 L10,5.5 L8,5.5 Z" fill="#eee040" stroke="#000" stroke-width="1.2" stroke-linejoin="round"/><path d="M10.5,9.5 L14,9.5 L16,11.5 L16,14.5 L13,15.5 L12,11 Z" fill="#f0e030" stroke="#000" stroke-width="1.2" stroke-linejoin="round"/><path d="M10.5,9.8 L14,9.8 L15.5,11.2 L12,11.5Z" fill="#c08a28"/><path d="M3.5,3.5 L5,5" stroke="#000" stroke-width="1.2"/></svg>
<div class="a" style="left:55.3px;top:159.98px;font-size:10.85px;line-height:12.48px;color:#05051c;white-space:nowrap">Roundhouse East</div>
<div class="a" style="left:74.8px;top:177.98px;font-size:10.85px;line-height:12.48px;color:#05051c;white-space:nowrap">Annotations</div>
<svg class="a" style="left:53px;top:176px" width="17" height="17" viewBox="0 0 17 17"><path d="M1,4 L6,4 L7,2 L12,2 L13,4 L15,4 L15,15 L1,15 Z" fill="#f2e36a" stroke="#6a5a10" stroke-width="1"/><rect x="1.5" y="5" width="13" height="9.5" fill="#f8ec88" stroke="#8a7a20" stroke-width="0.6"/><text x="4.5" y="13.5" font-size="10" font-weight="bold" fill="#2030a0" font-family="Liberation Serif">A</text></svg>
<div class="a" style="left:74.8px;top:195.98px;font-size:10.85px;line-height:12.48px;color:#05051c;white-space:nowrap">Design Binder</div>
<svg class="a" style="left:53px;top:194px" width="17" height="17" viewBox="0 0 17 17"><path d="M1,9 L1,11 L8,16 L15.5,9 L15.5,7Z" fill="#c8a030" stroke="#222" stroke-width="1"/><path d="M1,9 L8.5,1.5 L15.5,7 L8,14Z" fill="#f6e060" stroke="#222" stroke-width="1.1"/><path d="M2,10 L8,14.5 L15,8" stroke="#fff8d0" stroke-width="0.8" fill="none"/></svg>
<svg class="a" style="left:40px;top:197px" width="8" height="10" viewBox="0 0 8 10"><path d="M1.5,1 L6,5 L1.5,9Z" fill="#c8e4f4" stroke="#a8c0d4" stroke-width="1"/></svg>
<div class="a" style="left:74.8px;top:213.98px;font-size:10.85px;line-height:12.48px;color:#05051c;white-space:nowrap">Solid Bodies(1)</div>
<svg class="a" style="left:53px;top:212px" width="17" height="17" viewBox="0 0 17 17"><path d="M1,4 L6,4 L7,2 L12,2 L13,4 L15,4 L15,15 L1,15 Z" fill="#f2e36a" stroke="#6a5a10" stroke-width="1"/><rect x="1.5" y="5" width="13" height="9.5" fill="#f8ec88" stroke="#8a7a20" stroke-width="0.6"/><rect x="4" y="6.5" width="6" height="6" fill="none" stroke="#111" stroke-width="1.1"/><rect x="6" y="8.5" width="6" height="5" fill="#f8ec88" stroke="#111" stroke-width="1.1"/></svg>
<svg class="a" style="left:40px;top:215px" width="8" height="10" viewBox="0 0 8 10"><path d="M1.5,1 L6,5 L1.5,9Z" fill="#c8e4f4" stroke="#a8c0d4" stroke-width="1"/></svg>
<div class="a" style="left:74.8px;top:231.98px;font-size:10.85px;line-height:12.48px;color:#05051c;white-space:nowrap">Material &lt;not specified&gt;</div>
<svg class="a" style="left:53px;top:230px" width="17" height="17" viewBox="0 0 17 17"><circle cx="3.5" cy="3.5" r="2.5" fill="#e02020"/><circle cx="3.5" cy="8.5" r="2.5" fill="#2040e0"/><circle cx="3.5" cy="13.5" r="2.5" fill="#20a020"/><path d="M7,4 L14,4 M7,9 L14,9 M7,14 L14,14" stroke="#222" stroke-width="1.5"/></svg>
<div class="a" style="left:74.8px;top:249.98px;font-size:10.85px;line-height:12.48px;color:#05051c;white-space:nowrap">Lighting</div>
<svg class="a" style="left:53px;top:248px" width="17" height="17" viewBox="0 0 17 17"><path d="M1,4 L6,4 L7,2 L12,2 L13,4 L15,4 L15,15 L1,15 Z" fill="#f2e36a" stroke="#6a5a10" stroke-width="1"/><rect x="1.5" y="5" width="13" height="9.5" fill="#f8ec88" stroke="#8a7a20" stroke-width="0.6"/><path d="M3,13 A5,5 0 0 1 13,13Z" fill="#f08020"/><path d="M8,6 L8,8 M4,8 L5,9 M12,8 L11,9" stroke="#c04010"/></svg>
<svg class="a" style="left:40px;top:251px" width="8" height="10" viewBox="0 0 8 10"><path d="M1.5,1 L6,5 L1.5,9Z" fill="#c8e4f4" stroke="#a8c0d4" stroke-width="1"/></svg>
<div class="a" style="left:74.8px;top:267.98px;font-size:10.85px;line-height:12.48px;color:#05051c;white-space:nowrap">Front Plane</div>
<svg class="a" style="left:53px;top:266px" width="17" height="17" viewBox="0 0 17 17"><path d="M8,1.5 L14.5,8 L8,14.5 L1.5,8 Z" fill="none" stroke="#111" stroke-width="1.1"/><path d="M1,1 L3.5,3.5 M12.5,12.5 L15.5,15.5 M5,6 L10,11 M7,4 L12,9" stroke="#111" stroke-width="1" fill="none"/></svg>
<div class="a" style="left:74.8px;top:285.98px;font-size:10.85px;line-height:12.48px;color:#05051c;white-space:nowrap">Top Plane</div>
<svg class="a" style="left:53px;top:284px" width="17" height="17" viewBox="0 0 17 17"><path d="M8,1.5 L14.5,8 L8,14.5 L1.5,8 Z" fill="none" stroke="#111" stroke-width="1.1"/><path d="M1,1 L3.5,3.5 M12.5,12.5 L15.5,15.5 M5,6 L10,11 M7,4 L12,9" stroke="#111" stroke-width="1" fill="none"/></svg>
<div class="a" style="left:74.8px;top:303.98px;font-size:10.85px;line-height:12.48px;color:#05051c;white-space:nowrap">Right Plane</div>
<svg class="a" style="left:53px;top:302px" width="17" height="17" viewBox="0 0 17 17"><path d="M8,1.5 L14.5,8 L8,14.5 L1.5,8 Z" fill="none" stroke="#111" stroke-width="1.1"/><path d="M1,1 L3.5,3.5 M12.5,12.5 L15.5,15.5 M5,6 L10,11 M7,4 L12,9" stroke="#111" stroke-width="1" fill="none"/></svg>
<div class="a" style="left:74.8px;top:321.98px;font-size:10.85px;line-height:12.48px;color:#05051c;white-space:nowrap">Origin</div>
<svg class="a" style="left:53px;top:320px" width="17" height="17" viewBox="0 0 17 17"><path d="M8,2 L8,13 L16,13" stroke="#d01030" stroke-width="1.3" fill="none"/><path d="M6,4 L8,1 L10,4Z M13,11 L16,13 L13,15Z" fill="#d01030"/><path d="M5,11 L10,16 M10,11 L5,16 M7.5,10.5 L7.5,16.5" stroke="#222" stroke-width="0.9"/></svg>
<div class="a" style="left:74.8px;top:339.98px;font-size:10.85px;line-height:12.48px;color:#05051c;white-space:nowrap">Extrude1</div>
<svg class="a" style="left:53px;top:338px" width="18" height="18" viewBox="0 0 18 18"><path d="M1,4 Q1,1 4,1 L12,1 Q14.5,1 14.5,3.5 L14.5,15 L2.5,15 Q1,15 1,13.5 Z" fill="#d8b020" stroke="#000" stroke-width="1.3" stroke-linejoin="round"/><rect x="3.5" y="3.5" width="10" height="10.5" fill="#f8e860" stroke="#333" stroke-width="0.8"/><path d="M3.5,3.5 L13.5,3.5" stroke="#fffab0" stroke-width="1"/><path d="M5.5,6 L9,6 L13,10 L13,13 L10,13 L5.5,8.5Z" fill="#38b848" stroke="#0a4a10" stroke-width="0.7"/><rect x="10.5" y="10.5" width="6" height="6" fill="#48d858" stroke="#0a5a10" stroke-width="0.8"/></svg>
<svg class="a" style="left:40px;top:341px" width="8" height="10" viewBox="0 0 8 10"><path d="M1.5,1 L6,5 L1.5,9Z" fill="#c8e4f4" stroke="#a8c0d4" stroke-width="1"/></svg>
<div class="a" style="left:74.8px;top:357.98px;font-size:10.85px;line-height:12.48px;color:#05051c;white-space:nowrap">(-) Sketch2</div>
<svg class="a" style="left:53px;top:356px" width="18" height="17" viewBox="0 0 18 17"><path d="M6,1 L2,1 L2,11 L6,15 L16,15" stroke="#222" stroke-width="1.1" fill="none"/><path d="M3,12 C5,6 10,4 15,4" stroke="#333" stroke-width="0.8" fill="none"/><path d="M6,10 L14,3 L16,5 L8,12Z" fill="#fff" stroke="#333" stroke-width="0.8"/></svg>
<div class="a" style="left:74.8px;top:375.98px;font-size:10.85px;line-height:12.48px;color:#05051c;white-space:nowrap">Extrude2</div>
<svg class="a" style="left:53px;top:374px" width="18" height="18" viewBox="0 0 18 18"><path d="M1,4 Q1,1 4,1 L12,1 Q14.5,1 14.5,3.5 L14.5,15 L2.5,15 Q1,15 1,13.5 Z" fill="#d8b020" stroke="#000" stroke-width="1.3" stroke-linejoin="round"/><rect x="3.5" y="3.5" width="10" height="10.5" fill="#f8e860" stroke="#333" stroke-width="0.8"/><path d="M3.5,3.5 L13.5,3.5" stroke="#fffab0" stroke-width="1"/><path d="M5.5,6 L9,6 L13,10 L13,13 L10,13 L5.5,8.5Z" fill="#38b848" stroke="#0a4a10" stroke-width="0.7"/><rect x="10.5" y="10.5" width="6" height="6" fill="#48d858" stroke="#0a5a10" stroke-width="0.8"/></svg>
<svg class="a" style="left:40px;top:377px" width="8" height="10" viewBox="0 0 8 10"><path d="M1.5,1 L6,5 L1.5,9Z" fill="#c8e4f4" stroke="#a8c0d4" stroke-width="1"/></svg>
<div class="a" style="left:74.8px;top:393.98px;font-size:10.85px;line-height:12.48px;color:#05051c;white-space:nowrap">Cut-Extrude1</div>
<svg class="a" style="left:53px;top:392px" width="18" height="18" viewBox="0 0 18 18"><path d="M1,4 Q1,1 4,1 L12,1 Q14.5,1 14.5,3.5 L14.5,15 L2.5,15 Q1,15 1,13.5 Z" fill="#d8b020" stroke="#000" stroke-width="1.3" stroke-linejoin="round"/><rect x="3.5" y="3.5" width="10" height="10.5" fill="#f8e860" stroke="#333" stroke-width="0.8"/><path d="M3.5,3.5 L13.5,3.5" stroke="#fffab0" stroke-width="1"/><rect x="5" y="5.5" width="6" height="6" fill="#fff8a0" stroke="#111" stroke-width="1"/><rect x="6.5" y="7" width="3.5" height="3.5" fill="#2a6a3a"/></svg>
<svg class="a" style="left:40px;top:395px" width="8" height="10" viewBox="0 0 8 10"><path d="M1.5,1 L6,5 L1.5,9Z" fill="#c8e4f4" stroke="#a8c0d4" stroke-width="1"/></svg>
<div class="a" style="left:74.8px;top:411.98px;font-size:10.85px;line-height:12.48px;color:#05051c;white-space:nowrap">Extrude3</div>
<svg class="a" style="left:53px;top:410px" width="18" height="18" viewBox="0 0 18 18"><path d="M1,4 Q1,1 4,1 L12,1 Q14.5,1 14.5,3.5 L14.5,15 L2.5,15 Q1,15 1,13.5 Z" fill="#d8b020" stroke="#000" stroke-width="1.3" stroke-linejoin="round"/><rect x="3.5" y="3.5" width="10" height="10.5" fill="#f8e860" stroke="#333" stroke-width="0.8"/><path d="M3.5,3.5 L13.5,3.5" stroke="#fffab0" stroke-width="1"/><path d="M5.5,6 L9,6 L13,10 L13,13 L10,13 L5.5,8.5Z" fill="#38b848" stroke="#0a4a10" stroke-width="0.7"/><rect x="10.5" y="10.5" width="6" height="6" fill="#48d858" stroke="#0a5a10" stroke-width="0.8"/></svg>
<svg class="a" style="left:40px;top:413px" width="8" height="10" viewBox="0 0 8 10"><path d="M1.5,1 L6,5 L1.5,9Z" fill="#c8e4f4" stroke="#a8c0d4" stroke-width="1"/></svg>
<div class="a" style="left:31px;top:426px;width:188px;height:2px;background:#dfe870"></div>
<div class="a" style="left:31px;top:428px;width:188px;height:2px;background:#1a1a1a"></div>
<div class="a" style="left:222px;top:154px;width:1px;height:591px;background:#a8acb4"></div>
<div class="a" style="left:30px;top:744px;width:192px;height:1px;background:#fff"></div>
<div class="a" style="left:31px;top:154px;width:1px;height:590px;background:#9098a0"></div>
<div class="a" style="left:0;top:745px;width:28px;height:1px;background:#c0c4ca"></div>
<div class="a" style="left:1238px;top:122px;width:17px;height:8px;border:1px solid #000;border-left:none;background:#f6f7f9"></div>
<div class="a" style="left:1238px;top:130px;width:16px;height:600px;background:linear-gradient(90deg,#e6e6e8,#f8f8f8 60%,#fdfdfd)"></div>
<svg class="a" style="left:1242px;top:135px" width="9" height="6" viewBox="0 0 9 6"><path d="M0,5 L4.5,0 L9,5Z" fill="#b0b4b8"/></svg>
<svg class="a" style="left:1242px;top:718px" width="9" height="6" viewBox="0 0 9 6"><path d="M0,0 L4.5,5 L9,0Z" fill="#a8acb0"/></svg>
<div class="a" style="left:237px;top:730px;width:1001px;height:15px;background:linear-gradient(#ececee,#fafafa 60%,#fefefe)"></div>
<div class="a" style="left:230px;top:729px;width:1008px;height:1px;background:#fafafa"></div>
<div class="a" style="left:230px;top:730px;width:7px;height:17px;border:1px solid #000;border-top:none;border-left:none;background:#f4f6fa"></div>
<div class="a" style="left:236px;top:730px;width:1px;height:1px;background:#000"></div>
<svg class="a" style="left:241px;top:734px" width="6" height="9" viewBox="0 0 6 9"><path d="M5,0 L0,4.5 L5,9Z" fill="#b0b4b8"/></svg>
<svg class="a" style="left:1225px;top:734px" width="6" height="9" viewBox="0 0 6 9"><path d="M0,0 L5,4.5 L0,9Z" fill="#a8acb0"/></svg>
<div class="a" style="left:1256px;top:146px;width:22px;height:28px;background:#fdfdfe;border-radius:0 3px 3px 0;border-top:1px solid #b0b4ba;border-right:2px solid #f0a020"></div>
<div class="a" style="left:1256px;top:174px;width:21px;height:26px;background:linear-gradient(90deg,#f0f2f5,#dde0e5);border:1px solid #c0c4ca;border-left:none;border-radius:0 3px 3px 0"></div>
<div class="a" style="left:1256px;top:201px;width:21px;height:26px;background:linear-gradient(90deg,#f0f2f5,#dde0e5);border:1px solid #c0c4ca;border-left:none;border-radius:0 3px 3px 0"></div>
<svg class="a" style="left:1258px;top:152px" width="17" height="16" viewBox="0 0 17 16"><path d="M1,8 L8,1 L15,8" fill="none" stroke="#111" stroke-width="1.5"/><path d="M3,8 L3,15 L13,15 L13,8 L8,3Z" fill="#fffad0" stroke="#111" stroke-width="1.1"/><rect x="7" y="10" width="3" height="5" fill="#e0b020"/><rect x="12" y="1" width="2" height="5" fill="#c02020"/></svg>
<svg class="a" style="left:1257px;top:179px" width="18" height="17" viewBox="0 0 18 17"><rect x="1" y="8" width="4" height="8" fill="#30b040" stroke="#111" stroke-width="0.8"/><rect x="6" y="5" width="4" height="11" fill="#f0d030" stroke="#111" stroke-width="0.8"/><rect x="11" y="2" width="4" height="14" fill="#5080e0" stroke="#111" stroke-width="0.8"/><path d="M1,8 L5,5 L10,5 L15,2" stroke="#111" stroke-width="0.8" fill="none"/></svg>
<svg class="a" style="left:1257px;top:206px" width="18" height="16" viewBox="0 0 18 16"><path d="M1,4 L6,4 L7,2 L12,2 L12,5 L15,5 L15,14 L1,14Z" fill="#e8c050" stroke="#806010" stroke-width="0.9"/><path d="M4,8 L17,8 L15,14 L1,14Z" fill="#f8e090" stroke="#806010" stroke-width="0.9"/></svg>
<svg class="a" style="left:1259px;top:231.5px" width="16" height="16" viewBox="0 0 16 16"><circle cx="8" cy="8" r="7" fill="#f4f6fa" stroke="#9098b8" stroke-width="1"/><path d="M7,4.5 L4,8 L7,11.5 M11,4.5 L8,8 L11,11.5" stroke="#1a2a8a" stroke-width="1.6" fill="none"/></svg>
<svg class="a" style="left:1259px;top:656.5px" width="16" height="16" viewBox="0 0 16 16"><circle cx="8" cy="8" r="7" fill="#f4f6fa" stroke="#9098b8" stroke-width="1"/><path d="M7,4.5 L4,8 L7,11.5 M11,4.5 L8,8 L11,11.5" stroke="#1a2a8a" stroke-width="1.6" fill="none"/></svg>
<div class="a" style="left:1263px;top:257px;width:5px;height:394px;border-left:1px solid #b8bcc4;border-right:1px solid #b8bcc4"></div>
<div class="a" style="left:1256px;top:746px;width:24px;height:1px;background:#b8bcc4"></div>
<div class="a" style="left:1091px;top:750px;width:1px;height:14px;background:#d0d6de;border-right:1px solid #fff"></div>
<div class="a" style="left:1099px;top:750px;width:1px;height:14px;background:#d0d6de;border-right:1px solid #fff"></div>
<div class="a" style="left:1107px;top:750px;width:1px;height:14px;background:#d0d6de;border-right:1px solid #fff"></div>
<div class="a" style="left:1172px;top:750px;width:1px;height:14px;background:#d0d6de;border-right:1px solid #fff"></div>
<div class="a" style="left:1180px;top:750px;width:1px;height:14px;background:#d0d6de;border-right:1px solid #fff"></div>
<div class="a" style="left:1188px;top:750px;width:1px;height:14px;background:#d0d6de;border-right:1px solid #fff"></div>
<div class="a" style="left:1217px;top:750px;width:1px;height:14px;background:#d0d6de;border-right:1px solid #fff"></div>
<div class="a" style="left:1112px;top:752.41px;font-size:10.6px;line-height:12.19px;color:#101010;white-space:nowrap">Editing Part</div>
<svg class="a" style="left:1199px;top:750px" width="16" height="16" viewBox="0 0 16 16"><rect x="1" y="2" width="14" height="13" fill="#fafad0" stroke="#a0a890" stroke-width="0.8"/><rect x="1" y="1" width="14" height="2" fill="#3a6aa8"/><text x="4" y="13.5" font-size="11" font-weight="bold" fill="#20a020" font-family="Liberation Sans">?</text></svg>
<svg class="a" style="left:1264px;top:752px" width="16" height="13" viewBox="0 0 16 13"><path d="M2,12 L13,1 M6,12 L13,5 M10,12 L13,9" stroke="#c8ccd2" stroke-width="2"/></svg>
<div class="a" style="left:0;top:766px;width:1280px;height:34px;background:linear-gradient(#000008 0px,#000008 1px,#3a3e4a 1px,#3a3e4a 3px,#000008 3px,#000008 4px,#9ea2ae 4px,#9ea2ae 5px,#7c808e 5px,#464a5e 18px,#2c2e3c 18px,#181a26 33px,#05060a 33px)"></div>
<div class="a" style="left:78px;top:772px;width:1px;height:27px;background:#30343a"></div>
<svg class="a" style="left:12px;top:765px" width="44" height="40" viewBox="0 0 44 40"><defs><radialGradient id="orb" cx="50%" cy="20%" r="75%"><stop offset="0" stop-color="#c8e8f8"/><stop offset="0.35" stop-color="#5a9ac8"/><stop offset="0.7" stop-color="#1a4a80"/><stop offset="1" stop-color="#0a2040"/></radialGradient></defs><circle cx="22" cy="21" r="20" fill="#04080e"/><circle cx="22" cy="21" r="18" fill="url(#orb)"/><path d="M11,15 C14,13 17,13 21,15 L20,22 C17,20 14,20 10,22Z" fill="#f06a20"/><path d="M23,15 C26,17 29,17 33,15 L32,22 C28,24 25,24 22,22Z" fill="#90c838"/><path d="M10,24 C13,22 16,22 20,24 L19,31 C16,29 13,29 9,31Z" fill="#38a8f0"/><path d="M22,24 C25,26 28,26 32,24 L31,31 C27,33 24,33 21,31Z" fill="#f8c828"/></svg>
<svg class="a" style="left:92px;top:776px" width="17" height="17" viewBox="0 0 17 17"><circle cx="8.5" cy="8.5" r="7.5" fill="#e8c020"/><path d="M8.5,1 A7.5,7.5 0 0 1 15,5 L8.5,5Z" fill="#d02020"/><path d="M1.5,6 A7.5,7.5 0 0 1 8.5,1 L8.5,5 L5,9Z" fill="#d02020"/><path d="M1.5,6 L5,9 L7,15.5 A7.5,7.5 0 0 1 1.5,6Z" fill="#30a040"/><circle cx="8.5" cy="8.5" r="3.6" fill="#fff"/><circle cx="8.5" cy="8.5" r="2.6" fill="#3a6ad8"/></svg>
<div class="a" style="left:113px;top:778.84px;font-size:11px;line-height:12.65px;color:#fff;white-space:nowrap">Tyco Collector's Foru...</div>
<div class="a" style="left:244px;top:772px;width:158px;height:26px;background:linear-gradient(#3a3c46,#30323c 45%,#23263a 50%,#1a1f3a);border:1px solid #1c1e26;border-radius:2px"></div>
<svg class="a" style="left:252px;top:777px" width="18" height="17" viewBox="0 0 18 17"><path d="M1,5 L6,1.5 L17,2.5 L13,6.5 Z" fill="#f07060"/><path d="M13,6.5 L17,2.5 L17,12.5 L13,16.5 Z" fill="#a81c1c"/><path d="M1,5 L13,6.5 L13,16.5 L2,15 Z" fill="#d42a2a"/><text x="2.6" y="14" font-size="9" font-weight="bold" fill="#fff" font-family="Liberation Sans">S</text><text x="8.8" y="13.5" font-size="7" font-weight="bold" fill="#f4d8d8" font-family="Liberation Sans" transform="skewY(-8)">W</text></svg>
<div class="a" style="left:273.5px;top:778.84px;font-size:11px;line-height:12.65px;color:#fff;white-space:nowrap">SolidWorks 2005 - [R...</div>
<svg class="a" style="left:1093px;top:779px" width="9" height="12" viewBox="0 0 9 12"><path d="M7,1 L2,6 L7,11" stroke="#e8e8f0" stroke-width="2.2" fill="none"/></svg>
<svg class="a" style="left:1107px;top:776px" width="17" height="17" viewBox="0 0 17 17"><path d="M2,14 C3,10 6,9 9,10 C11,8 13,6 15,4 C15,7 14,9 13,11 L12,16 L10,13 L6,13 L4,16Z" fill="#e8f0fa"/></svg>
<div class="a" style="left:1125.5px;top:779.54px;font-size:11px;line-height:12.65px;color:#f0f020;font-weight:bold;white-space:nowrap">43°</div>
<svg class="a" style="left:1143px;top:777px" width="18" height="17" viewBox="0 0 18 17"><rect x="1" y="5" width="9" height="7" fill="#b0c8f0" stroke="#3050a0" stroke-width="0.8"/><rect x="3" y="13" width="5" height="2" fill="#d0d8e8"/><path d="M11,5 A4,4 0 0 1 11,11 M13,3 A7,7 0 0 1 13,13 M15,1 A9,9 0 0 1 15,15" stroke="#d0d8f0" fill="none" stroke-width="0.9"/></svg>
<svg class="a" style="left:1162px;top:776px" width="17" height="17" viewBox="0 0 17 17"><rect x="0.5" y="0.5" width="16" height="16" rx="1.5" fill="#e8eaec" stroke="#b0b4b8"/><circle cx="8.5" cy="8.5" r="6" fill="#c0c8d0" stroke="#708090"/><circle cx="7.5" cy="6" r="2" fill="#5090e0"/></svg>
<svg class="a" style="left:1181px;top:776px" width="13" height="17" viewBox="0 0 13 17"><ellipse cx="6.5" cy="8.5" rx="6" ry="8" fill="#1a2ad8"/><path d="M4,5 L9,10 L6.5,13 L6.5,4 L9,6.5 L4,12" stroke="#e02020" stroke-width="1.4" fill="none"/></svg>
<svg class="a" style="left:1198px;top:776px" width="17" height="17" viewBox="0 0 17 17"><circle cx="7" cy="7" r="6" fill="#9aa0a8" stroke="#5a6068"/><circle cx="7" cy="7" r="3" fill="#4a5058"/><path d="M10,14 L16,10 M9,16 L16,12" stroke="#8090c0" stroke-width="1.2"/></svg>
<div class="a" style="left:1221px;top:779.48px;font-size:10.3px;line-height:11.85px;color:#fff;white-space:nowrap">10:17 PM</div>
<svg class="a" style="left:0;top:0" width="1280" height="800" viewBox="0 0 1280 800">
<defs><filter id="sh" x="-20%" y="-50%" width="140%" height="200%"><feGaussianBlur stdDeviation="8"/></filter><filter id="sh2" x="-200%" y="-100%" width="500%" height="300%"><feGaussianBlur stdDeviation="8"/></filter></defs>
<polygon points="484.4,427.0 484.5,490.7 522.4,514.3 592.7,533.0 684.6,543.3 783.5,543.3 875.3,533.0 945.1,514.3 983.2,490.7 983.2,427.0" fill="#102040" opacity="0.5" filter="url(#sh)"/>
<ellipse cx="486" cy="464" rx="14" ry="34" fill="#0a1a40" opacity="0.32" filter="url(#sh2)"/>
<ellipse cx="982" cy="464" rx="12" ry="32" fill="#0a1a40" opacity="0.22" filter="url(#sh2)"/>
<polygon points="484.5,436.4 522.4,460.0 592.7,478.7 684.6,489.0 783.5,489.0 875.3,478.7 945.1,460.0 983.2,436.4 983.2,408.2 945.1,383.3 876.5,364.8 783.5,357.8 684.6,357.8 592.5,364.8 523.8,383.2 484.4,408.2" fill="#b8b9bd" stroke="#000" stroke-width="1.25" stroke-linejoin="round"/>
<polygon points="484.5,436.4 522.4,460.0 522.4,512.3 484.5,488.7" fill="#c6c6ca" stroke="#000" stroke-width="1.25" stroke-linejoin="round"/>
<polygon points="522.4,460.0 592.7,478.7 592.7,531.0 522.4,512.3" fill="#cdcccf" stroke="#000" stroke-width="1.25" stroke-linejoin="round"/>
<polygon points="592.7,478.7 684.6,489.0 684.6,541.3 592.7,531.0" fill="#d4d4d8" stroke="#000" stroke-width="1.25" stroke-linejoin="round"/>
<polygon points="684.6,489.0 783.5,489.0 783.5,541.3 684.6,541.3" fill="#d3d1d5" stroke="#000" stroke-width="1.25" stroke-linejoin="round"/>
<polygon points="783.5,489.0 875.3,478.7 875.3,531.0 783.5,541.3" fill="#d7d6e6" stroke="#000" stroke-width="1.25" stroke-linejoin="round"/>
<polygon points="875.3,478.7 945.1,460.0 945.1,512.3 875.3,531.0" fill="#ffffff" stroke="#000" stroke-width="1.25" stroke-linejoin="round"/>
<polygon points="945.1,460.0 983.2,436.4 983.2,488.7 945.1,512.3" fill="#e2e2f4" stroke="#000" stroke-width="1.25" stroke-linejoin="round"/>
<line x1="484.5" y1="408.2" x2="484.5" y2="488.7" stroke="#000" stroke-width="1.25"/>
<line x1="983.2" y1="408.2" x2="983.2" y2="488.7" stroke="#000" stroke-width="1.25"/>
<polygon points="623.5,384.3 640.8,394.8 671.5,402.7 712.5,407.5 755.0,407.5 796.0,402.7 826.6,394.8 843.9,384.3 843.9,371.8 826.6,359.5 797.4,352.8 757.0,348.3 710.5,348.3 670.0,352.8 640.8,359.5 623.5,371.8" fill="#b8b9bd" stroke="#000" stroke-width="1.25" stroke-linejoin="round"/>
<polygon points="623.5,384.3 640.8,394.8 640.8,438.4 623.5,427.9" fill="#c6c6ca" stroke="#000" stroke-width="1.25" stroke-linejoin="round"/>
<polygon points="640.8,394.8 671.5,402.7 671.5,446.3 640.8,438.4" fill="#cdcdd1" stroke="#000" stroke-width="1.25" stroke-linejoin="round"/>
<polygon points="671.5,402.7 712.5,407.5 712.5,451.1 671.5,446.3" fill="#d4d4d8" stroke="#000" stroke-width="1.25" stroke-linejoin="round"/>
<polygon points="712.5,407.5 755.0,407.5 755.0,451.1 712.5,451.1" fill="#d0d0d4" stroke="#000" stroke-width="1.25" stroke-linejoin="round"/>
<polygon points="755.0,407.5 796.0,402.7 796.0,446.3 755.0,451.1" fill="#d8d8e8" stroke="#000" stroke-width="1.25" stroke-linejoin="round"/>
<polygon points="796.0,402.7 826.6,394.8 826.6,438.4 796.0,446.3" fill="#ffffff" stroke="#000" stroke-width="1.25" stroke-linejoin="round"/>
<polygon points="826.6,394.8 843.9,384.3 843.9,427.9 826.6,438.4" fill="#e2e2f5" stroke="#000" stroke-width="1.25" stroke-linejoin="round"/>
<line x1="623.5" y1="371.8" x2="623.5" y2="427.9" stroke="#000" stroke-width="1.25"/>
<line x1="843.9" y1="371.8" x2="843.9" y2="427.9" stroke="#000" stroke-width="1.25"/>
<g stroke="#0000e0" fill="#0000e0" stroke-width="1.6"><line x1="734.5" y1="455" x2="734.5" y2="484.5"/><path d="M732,462 L737,462 L734.5,457 Z" stroke-width="1"/><path d="M731,481 L738,488 M738,481 L731,488 M729.5,484.5 L739.5,484.5" stroke-width="1.1"/><path d="M739,487.5 L744.5,487.5 L741,484.5 Z" stroke-width="1"/></g>
<g><path d="M267,689 L267,672 L264,672 L269,662 L274,672 L271,672 L271,689 Z" fill="#1b8a24" stroke="#116618" stroke-width="0.8"/><path d="M269,688 L284,692 L284,689.5 L291,695.5 L283,698.5 L283,696 L268,692 Z" fill="#d41818" stroke="#a00" stroke-width="0.6"/><path d="M269,688 L254,692 L254,689.5 L247,695.5 L255,698.5 L255,696 L269,692 Z" fill="#1818d8" stroke="#00a" stroke-width="0.6"/><path d="M265,652 L268.5,656.5 L272,652 M268.5,656.5 L268.5,660.5" stroke="#1a7a1a" stroke-width="1" fill="none"/><path d="M290,692 L295,700.5 M295,692 L290,700.5" stroke="#d02020" stroke-width="1" fill="none"/><path d="M242,692.5 L247,692.5 L242,700 L247,700" stroke="#2020c0" stroke-width="1.1" fill="none"/></g>
</svg>
</body></html>
